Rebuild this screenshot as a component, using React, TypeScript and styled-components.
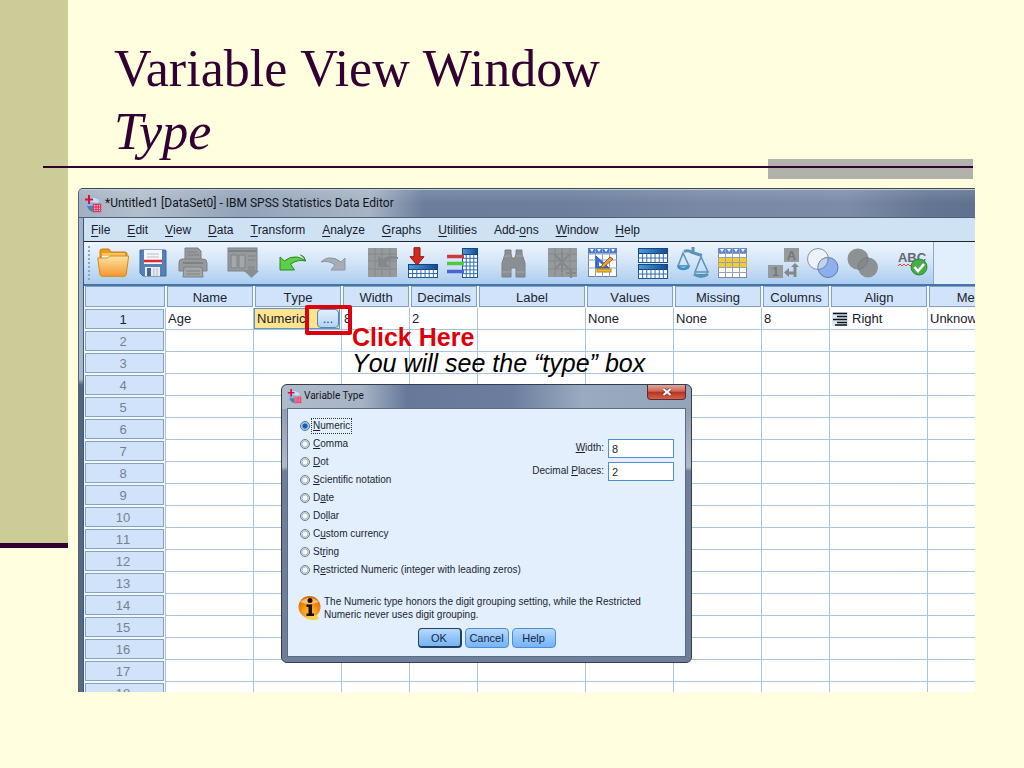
import React from 'react';
import styled, { createGlobalStyle } from 'styled-components';

const GlobalStyle = createGlobalStyle`
  *, *::before, *::after { box-sizing: border-box; }
  body { margin: 0; background: #ffffdf; font-family: "Liberation Sans", Arial, sans-serif; }
  button { font-family: inherit; cursor: pointer; }
`;

/* ---------- slide ---------- */

const Slide = styled.div`
  display: grid;
  grid-template-columns: 68px minmax(0, 1fr);
  height: 100vh;
  overflow: hidden;
  background: #ffffdf;
`;

const SideBand = styled.div`
  height: calc(100vh - 220px);
  background: #cccc99;
  border-bottom: 5px solid #330033;
`;

const SlideBody = styled.main`
  display: flex;
  flex-direction: column;
  min-width: 0;
  min-height: 0;
  padding: 37px 49px 76px 0;
`;

const Title = styled.h1`
  margin: 0;
  padding-left: 46px;
  font: 400 52px/63px "Liberation Serif", "Times New Roman", serif;
  color: #330033;
  white-space: nowrap;
`;

const Subtitle = styled.em`
  display: block;
`;

const Rule = styled.div`
  display: grid;
  flex: none;
  align-items: center;
  height: 20px;
  margin: -4px 2px 9px -25px;
`;

const RuleBlock = styled.span`
  grid-area: 1 / 1;
  justify-self: end;
  width: 205px;
  height: 20px;
  background: #b2b2ad;
`;

const RuleLine = styled.span`
  grid-area: 1 / 1;
  height: 2px;
  margin-bottom: 4px;
  background: #330033;
`;

/* ---------- editor window ---------- */

const EditorWindow = styled.section`
  position: relative;
  flex: 1;
  min-height: 0;
  margin-left: 10px;
  font-kerning: none;
`;

const WindowFrame = styled.div`
  height: 100%;
  overflow: hidden;
  padding-left: 4px;
  border-top: 1px solid #3b4656;
  border-left: 1px solid #56606f;
  border-top-left-radius: 5px;
  background:
    linear-gradient(180deg, #a3b1c4 0, #a9b6c8 190px, #56657a 196px, #5b6a80 100%) 0 0 / 5px 100% no-repeat,
    #8fa0b8;
`;

const TitleBar = styled.header`
  display: flex;
  align-items: center;
  gap: 3px;
  height: 29px;
  margin-left: -4px;
  padding-left: 5px;
  border-top: 1px solid #c3ccd8;
  border-bottom: 1px solid #51607a;
  background:
    linear-gradient(180deg, rgba(255, 255, 255, 0.12), rgba(255, 255, 255, 0) 50%),
    linear-gradient(90deg, #a3afc0 0, #b3bfcd 60px, #93a3b8 160px, #a7b4c5 290px, #6a7d9b 345px, #6b7e9c 480px, #7888a5 620px, #7c8ca8 770px, #637592 850px, #5f7190 100%);
`;

const TitleText = styled.h2<{ $small?: boolean }>`
  margin: 0;
  padding-bottom: 2px;
  font: 400 12px/18px Roboto, "Open Sans", sans-serif;
  font-size: ${({ $small }) => ($small ? 10 : 12)}px;
  color: #10151c;
  white-space: nowrap;
`;

const Client = styled.div`
  height: 100%;
  border-left: 1px solid #2d5a8e;
  background: #ffffff;
`;

const MenuBar = styled.nav`
  display: flex;
  gap: 17px;
  height: 24px;
  padding-left: 7px;
  border-bottom: 1px solid #1d2733;
  background: #cfe2f4;
`;

const MenuItem = styled.a`
  font-size: 12px;
  line-height: 24px;
  color: #14202c;
  text-decoration: none;
  white-space: nowrap;
  u { text-underline-offset: 2px; }
`;

const ToolbarRow = styled.div`
  display: flex;
  height: 44px;
  border-bottom: 2px solid #4374ab;
  background: #e1eefb;
`;

const Toolbar = styled.div`
  display: flex;
  align-items: center;
  gap: 18px;
  padding: 0 4px;
  border-right: 1px solid #8ea9c6;
  background: linear-gradient(180deg, #eef5fd 0, #d5e6f8 45%, #abcdf0 100%);
`;

const Grip = styled.span`
  width: 2px;
  height: 34px;
  margin-right: -11px;
  background: repeating-linear-gradient(180deg, #8fa6bf 0 2px, transparent 2px 4px);
`;

const ToolGroup = styled.div`
  display: flex;
  gap: 8px;
`;

const ToolButton = styled.button`
  display: block;
  width: 32px;
  height: 32px;
  padding: 0;
  border: 0;
  background: none;
  svg { display: block; }
`;

/* ---------- variable grid ---------- */

const Grid = styled.table`
  table-layout: fixed;
  width: 945px;
  border-spacing: 0;
  font-size: 13px;
  color: #16202b;
  td {
    height: 22px;
    padding: 0 2px;
    border-right: 1px solid #a9c4df;
    border-bottom: 1px solid #a9c4df;
    line-height: 21px;
    white-space: nowrap;
  }
  th { height: 22px; padding: 0 1px 1px 1px; font-weight: 400; background: #f3f8fe; }
`;

const HeadBox = styled.span<{ $muted?: boolean }>`
  display: block;
  height: 21px;
  border: 1px solid #86a0bd;
  background: #d0e3fa;
  line-height: 21px;
  text-align: center;
  color: ${({ $muted }) => ($muted ? '#76828f' : '#1b2530')};
`;

const RowHead = styled.th`
  border-right: 1px solid #a9c4df;
  & > span { height: 20px; line-height: 19px; padding-right: 3px; }
`;

const ActiveCell = styled.div`
  display: flex;
  justify-content: space-between;
  height: 21px;
  margin: 0 -1px 0 -2px;
  padding-left: 2px;
  border: 1px solid #5f93c4;
  background: #ffe48f;
  line-height: 20px;
`;

const EllipsisButton = styled.button`
  width: 22px;
  height: 19px;
  padding: 0;
  border: 1px solid #4d86c2;
  border-radius: 4px;
  background: linear-gradient(180deg, #e3effb, #b4d4f6);
  font-size: 12px;
  line-height: 12px;
  color: #1f3c5c;
`;

const AlignValue = styled.span`
  display: flex;
  align-items: center;
  gap: 4px;
`;

/* ---------- annotations ---------- */

const Highlight = styled.div`
  position: absolute;
  top: 117px;
  left: 227px;
  width: 47px;
  height: 30px;
  border: 4px solid #dc0010;
  border-radius: 2px;
`;

const Callout = styled.div`
  position: absolute;
  top: 136px;
  left: 274px;
  font-size: 25px;
  line-height: 26px;
  color: #000000;
  white-space: nowrap;
  strong { display: block; color: #dd0008; }
`;

/* ---------- dialog ---------- */

const Dialog = styled.form`
  position: absolute;
  top: 196px;
  left: 203px;
  width: 411px;
  padding: 0 5px 5px;
  border: 1px solid #333e50;
  border-radius: 6px;
  background:
    linear-gradient(180deg, rgba(255, 255, 255, 0.25) 0, rgba(255, 255, 255, 0.45) 58px, rgba(255, 255, 255, 0) 62px) 0 24px / 100% 100% no-repeat,
    linear-gradient(90deg, #b0bbca 0, #a7b4c6 80px, #66799a 125px, #6b7e9e 230px, #9aabc0 300px, #94a4ba 100%) 0 0 / 100% 24px no-repeat,
    #6f7f99;
  font-size: 10px;
  color: #1c1f33;
`;

const DialogTitle = styled.header`
  display: flex;
  align-items: center;
  gap: 2px;
  height: 23px;
`;

const CloseButton = styled.button`
  align-self: flex-start;
  display: grid;
  place-items: center;
  width: 39px;
  height: 15px;
  margin-left: auto;
  padding: 0;
  border: 1px solid #5e2a30;
  border-top: 0;
  border-radius: 0 0 4px 4px;
  background: linear-gradient(180deg, #e0a69c 0, #cc6657 45%, #b8301f 50%, #d2634c 100%);
`;

const DialogBody = styled.div`
  border: 1px solid #5d6c86;
  background: #e3effc;
  padding: 8px 11px 8px 12px;
`;

const DialogColumns = styled.div`
  display: flex;
  justify-content: space-between;
`;

const RadioList = styled.fieldset`
  margin: 0;
  padding: 0;
  border: 0;
`;

const RadioRow = styled.label`
  display: flex;
  align-items: center;
  gap: 2px;
  height: 18px;
  white-space: nowrap;
`;

const Radio = styled.input`
  appearance: none;
  width: 10px;
  height: 10px;
  margin: 0;
  border: 1px solid #6f7c8a;
  border-radius: 50%;
  background: radial-gradient(circle, #f4f8fc 0 2px, #a9b7c6 3px, #dfe8f0 4px);
  &:checked {
    border-color: #4376aa;
    background: radial-gradient(circle, #1c5ba0 0 2px, #8fc0ee 3px, #b9d8f5 4px);
  }
`;

const RadioText = styled.span<{ $focused?: boolean }>`
  padding: 1px;
  outline: ${({ $focused }) => ($focused ? '1px dotted #333333' : 'none')};
  line-height: 12px;
`;

const Fields = styled.div`
  display: flex;
  flex-direction: column;
  gap: 4px;
  padding-top: 22px;
`;

const FieldRow = styled.label`
  display: flex;
  align-items: center;
  justify-content: flex-end;
  gap: 4px;
  line-height: 15px;
  span { padding-bottom: 2px; }
`;

const FieldInput = styled.input`
  width: 66px;
  height: 19px;
  padding: 1px 3px 0;
  border: 1px solid #4f8fce;
  background: #ffffff;
  font: 11px "Liberation Sans", Arial, sans-serif;
  color: #1c1f33;
`;

const Notice = styled.div`
  display: flex;
  align-items: center;
  gap: 2px;
  height: 28px;
  margin: 15px 0 6px -2px;
  line-height: 13px;
  p { margin: 0; max-width: 330px; }
`;

const DialogActions = styled.div`
  display: flex;
  justify-content: center;
  gap: 3px;
  padding-right: 1px;
`;

const ActionButton = styled.button<{ $primary?: boolean }>`
  width: 44px;
  height: 20px;
  padding: 0;
  border: ${({ $primary }) => ($primary ? '2px solid #24405f' : '1px solid #4a8fd6')};
  border-width: ${({ $primary }) => ($primary ? '1px 2px 2px 1px' : '1px')};
  border-radius: 4px;
  background: linear-gradient(180deg, #b9dafa 0, #93c5f8 50%, #76b4f5 100%);
  font-size: 11px;
  line-height: 16px;
  color: #14254a;
`;

/* ---------- drawings ---------- */

const AppMark = ({ size }: { size: number }) => (
  <svg width={size} height={size} viewBox="0 0 18 18" aria-hidden="true">
    <circle cx="9.5" cy="9" r="7.5" fill="#8fb3dc" />
    <path d="M4 4a8 8 0 0 1 12 3l-4 1-5-1z" fill="#c9dcf0" />
    <path d="M3 11a8 8 0 0 0 7 6l0-6z" fill="#4d7fba" />
    <path d="M5 0v9M1 4.5h8" stroke="#d5123c" strokeWidth="2" />
    <rect x="9" y="9" width="8" height="8" fill="#fff" />
    <path d="M9 9.5h8M9 12h8M9 14.3h8M9 16.5h8M9.5 9v8M12 9v8M14.3 9v8M16.6 9v8" stroke="#dc3c5c" strokeWidth="1.3" />
  </svg>
);

const GREY = '#979a9d';
const DARK = '#7e8184';

type TableProps = { x: number; y: number; w: number; h: number; rows: number; cols: number; head: number };

const BlueTable = ({ x, y, w, h, rows, cols, head }: TableProps) => {
  const rh = (h - head) / rows;
  const cw = w / cols;
  return (
    <g>
      <rect x={x} y={y} width={w} height={h} fill="#fff" stroke="#1b5596" />
      <rect x={x} y={y} width={w} height={head} fill="url(#blueHead)" stroke="#12467f" />
      {Array.from({ length: rows - 1 }, (_, i) => (
        <path key={i} d={`M${x} ${y + head + rh * (i + 1)}h${w}`} stroke="#2f6cb0" />
      ))}
      {Array.from({ length: cols - 1 }, (_, i) => (
        <path key={i} d={`M${x + cw * (i + 1)} ${y + head}v${h - head}`} stroke="#2f6cb0" />
      ))}
    </g>
  );
};

const GreyGrid = () => (
  <g>
    <rect x="1" y="1" width="29" height="29" fill={GREY} />
    <path d="M1 7h29M1 14h29M1 22h29M8 1v29M15 1v29M23 1v29" stroke="#85888b" />
  </g>
);

const icons: Record<string, React.ReactNode> = {
  'Open data document': (
    <>
      <path d="M3 4q0-2 2-2h7l2 3h14q2 0 2 2v5H3z" fill="#eb9a1c" stroke="#c97c12" />
      <path d="M5 8h23v6H5z" fill="#fff" />
      <path d="M5 6h23v3H5z" fill="#f7c464" />
      <path d="M0.7 11h10l2-2h19l-2.5 18.5q-.4 1.8-2 1.8H5q-1.6 0-2-1.8z" fill="url(#folder)" stroke="#dd8512" />
    </>
  ),
  'Save this document': (
    <>
      <path d="M3 3h25q1 0 1 1v25H6l-3-3z" fill="#5582b4" stroke="#40699a" />
      <rect x="7" y="3" width="18" height="14" fill="#f5f7fa" />
      <path d="M10 7h12M10 10h12" stroke="#b8bec8" />
      <path d="M7 14h18" stroke="#dc2a2e" strokeWidth="2.5" />
      <rect x="8" y="20" width="15" height="9" fill="#e8ecf1" />
      <rect x="10" y="21" width="4" height="8" fill="#44688f" />
      <path d="M17 21v8M20 21v8" stroke="#b1b8c2" />
    </>
  ),
  Print: (
    <>
      <path d="M8 1h13l3 3v9H8z" fill={GREY} stroke={DARK} />
      <path d="M10 5h10M10 8h12" stroke={DARK} />
      <path d="M5 12h21q4 0 4 4v8H2v-8q0-4 3-4z" fill={GREY} stroke={DARK} />
      <path d="M6 16h20" stroke={DARK} strokeWidth="2" />
      <path d="M7 20h18l1 10H6z" fill="#a3a6a9" stroke={DARK} />
      <path d="M9 24h14M9 27h14" stroke={DARK} />
    </>
  ),
  'Recall recently used dialogs': (
    <>
      <rect x="1" y="1" width="29" height="23" fill={GREY} stroke={DARK} />
      <path d="M1 4h29" stroke={DARK} strokeWidth="2" />
      <path d="M4 8h6v13H4zM12 8h6v13h-6zM21 9h7M21 13h7" fill="#a5a8ab" stroke={DARK} />
      <path d="M21 19h7v5h4l-7.5 7-7.5-7h4z" fill="#8b8e91" />
    </>
  ),
  Undo: (
    <path
      d="M3 10l4.500 4Q13 9 20 10q5 1 8.500 4-1-5-5-6 4 1 5 6-7-2-15 3l4 6H3z"
      fill="#5fce48"
      stroke="#2d8a26"
    />
  ),
  Redo: <path d="M28 11l-4 4q-6-5-13-4-4 1-7 4 8-2 14 3l-4 5h14z" fill="#a7adb3" stroke="#8f959c" />,
  'Go to case': (
    <>
      <GreyGrid />
      <path d="M31 10q-10-3-15 2l-5-3v11h12l-4-4q4-5 12-4z" fill="#85888b" />
    </>
  ),
  'Go to variable': (
    <>
      <BlueTable x={1.5} y={17.5} w={29} h={13} rows={2} cols={7} head={5} />
      <path d="M7 .7h6v9h4l-7 8.3-7-8.3h4z" fill="#d5281e" stroke="#8e1710" />
    </>
  ),
  Variables: (
    <>
      <BlueTable x={15.5} y={1.5} w={15} h={29} rows={6} cols={4} head={6} />
      <path d="M0 9.5h17" stroke="#d03842" strokeWidth="3.5" />
      <path d="M0 16.5h17" stroke="#4fca3e" strokeWidth="3.5" />
      <path d="M0 24.5h17" stroke="#4c62cf" strokeWidth="3.5" />
    </>
  ),
  Find: (
    <>
      <path
        d="M8 3h6v4l1 4h3l1-4V3h6v4l3 9v14h-9v-9h-5v9H5V16l3-9z"
        fill="#8b8e92"
        stroke="#7b7e82"
      />
      <path d="M7 9h7M19 9h7M5 25h9M19 25h9" stroke="#a4a7aa" />
    </>
  ),
  'Insert cases': (
    <>
      <GreyGrid />
      <path d="M8 8l14 14M22 8L8 22M15 5v20M24 22v9M19 26h10" stroke="#85888b" strokeWidth="2" />
    </>
  ),
  'Insert variable': (
    <>
      <rect x="1.5" y="1.5" width="28" height="28" fill="#fff" stroke="#71809a" />
      <rect x="1.5" y="1.5" width="28" height="5" fill="#4a78d8" />
      <path d="M1 7h29M1 13h29M1 21h29M8.5 1v29M15.5 1v29M22.5 1v29" stroke="#8fa2c0" />
      <path d="M3 2l2 3 2-3zM10 2l2 3 2-3zM17 2l2 3 2-3zM24 2l2 3 2-3z" fill="#fff" />
      <path d="M9 9v12h13z" fill="#3d74d8" stroke="#2752a4" />
      <path d="M12 15v4h5z" fill="#fff" />
      <path d="M23 10L15 18l-1 3 3-1L26 12z" fill="#f0a23a" stroke="#a35a1c" />
      <rect x="10" y="22" width="14" height="3" fill="#efb92e" stroke="#b88414" />
    </>
  ),
  'Split file': (
    <>
      <BlueTable x={1.5} y={1.5} w={29} h={14} rows={2} cols={7} head={5} />
      <BlueTable x={1.5} y={17.5} w={29} h={14} rows={2} cols={7} head={5} />
    </>
  ),
  'Weight cases': (
    <g fill="none" stroke="#5b93b9" strokeWidth="1.5">
      <path d="M16 0v7M7 4.5q4-2 8 1l10 3" strokeWidth="3" />
      <path d="M6 6L1 19h11zM24 10l-6 15h13z" />
      <path d="M1 19q5 6 11 0z" fill="#b7dcf2" />
      <path d="M17 27q7 5 14 0" fill="#3a8fd0" strokeWidth="3" />
      <path d="M1 20q5 4 11 0" stroke="#3a8fd0" strokeWidth="2.5" />
    </g>
  ),
  'Select cases': (
    <>
      <rect x="1.5" y="1.5" width="28" height="29" fill="#fff" stroke="#7d8796" />
      <rect x="1.5" y="1.5" width="28" height="5" fill="#5b86dd" />
      <rect x="1.5" y="10" width="28" height="11" fill="#f3ca38" />
      <path d="M1 6.5h29M1 10.5h29M1 15.5h29M1 20.5h29M1 25.5h29M8.5 1v29M15.5 1v29M22.5 1v29" stroke="#98a1ac" />
      <path d="M3 2l2 3 2-3zM10 2l2 3 2-3zM17 2l2 3 2-3zM24 2l2 3 2-3z" fill="#fff" />
    </>
  ),
  'Value labels': (
    <>
      <rect x="17" y="1" width="15" height="14" fill={GREY} />
      <rect x="1" y="18" width="15" height="13" fill={GREY} />
      <text x="24.5" y="12.5" fontSize="13" fontWeight="700" textAnchor="middle" fill="#74777a">A</text>
      <text x="8.5" y="29" fontSize="12" fontWeight="700" textAnchor="middle" fill="#74777a">1</text>
      <path d="M28 18v8h-8M28 26v4" fill="none" stroke="#85888b" strokeWidth="3" />
      <path d="M24 20l4-4 4 4zM22 21v9l-5-4.5z" fill="#85888b" />
    </>
  ),
  'Use variable sets': (
    <>
      <circle cx="11" cy="12" r="10.5" fill="#eef3fb" stroke="#8793a6" />
      <circle cx="21" cy="20.5" r="10" fill="#7fa4ec" fillOpacity=".8" stroke="#5d78b4" />
      <path d="M11 22.5A10 10 0 0 1 21 10.5 10.5 10.5 0 0 1 11 22.5z" fill="#c3d2f0" stroke="#7d8cab" />
    </>
  ),
  'Show all variables': (
    <>
      <circle cx="11" cy="12" r="10.5" fill="#8e9194" />
      <circle cx="21" cy="20.5" r="10" fill="#8e9194" />
      <path d="M11 22.5A10 10 0 0 1 21 10.5 10.5 10.5 0 0 1 11 22.5z" fill="#85888b" stroke="#7b7e81" />
    </>
  ),
  'Spell check': (
    <>
      <text x="15" y="15" fontSize="13" fontWeight="700" textAnchor="middle" fill="#63686e">ABC</text>
      <path d="M1 19l2-2 2 2 2-2 2 2 2-2 2 2 2-2" fill="none" stroke="#d84a3a" />
      <circle cx="22" cy="20" r="8" fill="#47ad4b" stroke="#318a38" />
      <path d="M17.5 20l3.5 4 6-7" fill="none" stroke="#fff" strokeWidth="2.5" />
    </>
  ),
};

const InfoMark = () => (
  <svg width="24" height="26" viewBox="0 0 24 26" aria-hidden="true">
    <circle cx="11.5" cy="12" r="11" fill="url(#info)" />
    <path d="M6 22q6 5 15 2l-2-4z" fill="#f7cf4a" />
    <path d="M2 7q9-8 19 0-9 4-19 0z" fill="#ffd9a0" fillOpacity=".7" />
    <circle cx="12" cy="5.5" r="2.5" fill="#1c0d00" />
    <path d="M8.500 9.500h5.500v9h2v2.500H8.500v-2.500h2v-6.500h-2z" fill="#1c0d00" />
  </svg>
);

/* ---------- data ---------- */

type Parts = [string, string, string];

const menus: Parts[] = [
  ['', 'F', 'ile'],
  ['', 'E', 'dit'],
  ['', 'V', 'iew'],
  ['', 'D', 'ata'],
  ['', 'T', 'ransform'],
  ['', 'A', 'nalyze'],
  ['', 'G', 'raphs'],
  ['', 'U', 'tilities'],
  ['Add-', 'o', 'ns'],
  ['', 'W', 'indow'],
  ['', 'H', 'elp'],
];

const toolGroups = [
  ['Open data document', 'Save this document', 'Print'],
  ['Recall recently used dialogs'],
  ['Undo', 'Redo'],
  ['Go to case', 'Go to variable', 'Variables'],
  ['Find'],
  ['Insert cases', 'Insert variable'],
  ['Split file', 'Weight cases', 'Select cases'],
  ['Value labels', 'Use variable sets', 'Show all variables'],
  ['Spell check'],
];

const columns: [string, number][] = [
  ['Name', 88],
  ['Type', 88],
  ['Width', 68],
  ['Decimals', 68],
  ['Label', 108],
  ['Values', 88],
  ['Missing', 88],
  ['Columns', 68],
  ['Align', 98],
  ['Measure', 108],
];

const types: Parts[] = [
  ['', 'N', 'umeric'],
  ['', 'C', 'omma'],
  ['', 'D', 'ot'],
  ['', 'S', 'cientific notation'],
  ['D', 'a', 'te'],
  ['Do', 'l', 'lar'],
  ['C', 'u', 'stom currency'],
  ['St', 'r', 'ing'],
  ['R', 'e', 'stricted Numeric (integer with leading zeros)'],
];

const emptyRows = Array.from({ length: 17 }, (_, i) => i + 2);

const Mnemonic = ({ parts: [before, key, after] }: { parts: Parts }) => (
  <>
    {before}
    <u>{key}</u>
    {after}
  </>
);

const ToolIcon = ({ name }: { name: string }) => (
  <svg width="32" height="32" viewBox="0 0 32 32" aria-hidden="true">
    <defs>
      <linearGradient id="blueHead" x1="0" x2="1">
        <stop offset="0" stopColor="#4f97dc" />
        <stop offset="1" stopColor="#134b92" />
      </linearGradient>
      <linearGradient id="folder" x1="0" y1="0" x2="0" y2="1">
        <stop offset="0" stopColor="#fde3a4" />
        <stop offset="1" stopColor="#f5992c" />
      </linearGradient>
      <radialGradient id="info" cx=".5" cy=".75" r=".7">
        <stop offset="0" stopColor="#ffc53c" />
        <stop offset=".6" stopColor="#f18a12" />
        <stop offset="1" stopColor="#d96a08" />
      </radialGradient>
    </defs>
    {icons[name]}
  </svg>
);

const VariableTypeDialog = () => (
  <Dialog onSubmit={(e) => e.preventDefault()} aria-label="Variable Type">
    <DialogTitle>
      <AppMark size={15} />
      <TitleText $small>Variable Type</TitleText>
      <CloseButton type="button" aria-label="Close">
        <svg width="10" height="8" viewBox="0 0 10 8" aria-hidden="true">
          <path d="M1.5 1l7 6M8.5 1l-7 6" stroke="#6d3a3a" strokeWidth="3.5" />
          <path d="M1.5 1l7 6M8.5 1l-7 6" stroke="#fff" strokeWidth="2" />
        </svg>
      </CloseButton>
    </DialogTitle>
    <DialogBody>
      <DialogColumns>
        <RadioList>
          {types.map((parts, i) => (
            <RadioRow key={parts.join('')}>
              <Radio type="radio" name="variable-type" defaultChecked={i === 0} />
              <RadioText $focused={i === 0}>
                <Mnemonic parts={parts} />
              </RadioText>
            </RadioRow>
          ))}
        </RadioList>
        <Fields>
          <FieldRow>
            <span><u>W</u>idth:</span>
            <FieldInput type="text" defaultValue="8" />
          </FieldRow>
          <FieldRow>
            <span>Decimal <u>P</u>laces:</span>
            <FieldInput type="text" defaultValue="2" />
          </FieldRow>
        </Fields>
      </DialogColumns>
      <Notice>
        <InfoMark />
        <p>The Numeric type honors the digit grouping setting, while the Restricted Numeric never uses digit grouping.</p>
      </Notice>
      <DialogActions>
        <ActionButton type="submit" $primary>OK</ActionButton>
        <ActionButton type="button">Cancel</ActionButton>
        <ActionButton type="button">Help</ActionButton>
      </DialogActions>
    </DialogBody>
  </Dialog>
);

const VariableGrid = () => (
  <Grid>
    <colgroup>
      <col width={82} />
      {columns.map(([name, width]) => (
        <col key={name} width={width} />
      ))}
    </colgroup>
    <thead>
      <tr>
        <th><HeadBox /></th>
        {columns.map(([name]) => (
          <th key={name} scope="col"><HeadBox>{name}</HeadBox></th>
        ))}
      </tr>
    </thead>
    <tbody>
      <tr>
        <RowHead scope="row"><HeadBox>1</HeadBox></RowHead>
        <td>Age</td>
        <td>
          <ActiveCell>
            Numeric
            <EllipsisButton type="button" aria-label="Choose variable type">...</EllipsisButton>
          </ActiveCell>
        </td>
        <td>8</td>
        <td>2</td>
        <td />
        <td>None</td>
        <td>None</td>
        <td>8</td>
        <td>
          <AlignValue>
            <svg width="16" height="14" viewBox="0 0 16 14" aria-hidden="true">
              <rect width="16" height="14" fill="#d9e8f6" />
              <path d="M1 1.5h14M5 4.5h10M1 7.5h14M5 10.5h10M3 13h12" stroke="#111" strokeWidth="1.5" />
            </svg>
            Right
          </AlignValue>
        </td>
        <td>Unknown</td>
      </tr>
      {emptyRows.map((n) => (
        <tr key={n}>
          <RowHead scope="row"><HeadBox $muted>{n}</HeadBox></RowHead>
          {columns.map(([name]) => (
            <td key={name} />
          ))}
        </tr>
      ))}
    </tbody>
  </Grid>
);

export default function App() {
  return (
    <>
      <GlobalStyle />
      <Slide>
        <SideBand />
        <SlideBody>
          <Title>
            Variable&nbsp;View&nbsp;Window
            <Subtitle>Type</Subtitle>
          </Title>
          <Rule>
            <RuleBlock />
            <RuleLine />
          </Rule>
          <EditorWindow>
            <WindowFrame>
              <TitleBar>
                <AppMark size={18} />
                <TitleText>*Untitled1 [DataSet0] - IBM SPSS Statistics Data Editor</TitleText>
              </TitleBar>
              <Client>
                <MenuBar>
                  {menus.map((parts) => (
                    <MenuItem key={parts.join('')} href="#">
                      <Mnemonic parts={parts} />
                    </MenuItem>
                  ))}
                </MenuBar>
                <ToolbarRow>
                  <Toolbar role="toolbar">
                    <Grip />
                    {toolGroups.map((group) => (
                      <ToolGroup key={group[0]}>
                        {group.map((name) => (
                          <ToolButton key={name} type="button" aria-label={name}>
                            <ToolIcon name={name} />
                          </ToolButton>
                        ))}
                      </ToolGroup>
                    ))}
                  </Toolbar>
                </ToolbarRow>
                <VariableGrid />
              </Client>
            </WindowFrame>
            <Highlight />
            <Callout>
              <strong>Click Here</strong>
              <em>You will see the “type” box</em>
            </Callout>
            <VariableTypeDialog />
          </EditorWindow>
        </SlideBody>
      </Slide>
    </>
  );
}
